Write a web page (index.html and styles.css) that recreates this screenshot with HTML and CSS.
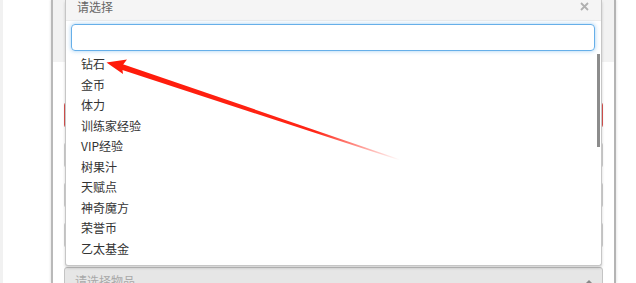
FILE: index.html
```html
<!DOCTYPE html>
<html lang="zh">
<head>
<meta charset="utf-8">
<title>请选择</title>
<link rel="stylesheet" href="styles.css">
</head>
<body>
<div class="page">
  <div class="gutter"></div>
  <div class="modal">
    <div class="modal-top"></div>
    <div class="modal-body">
      <div class="field field-error"></div>
      <div class="field"></div>
      <div class="field"></div>
      <div class="field"></div>
      <div class="select-box"><span>请选择物品</span><span class="caret"></span></div>
    </div>
  </div>

  <div class="dropdown">
    <div class="dd-header">
      <span>请选择</span>
      <svg class="close" width="9" height="9" viewBox="0 0 9 9"><path d="M1 1L8 8M8 1L1 8" stroke="#b0b0b0" stroke-width="1.8"/></svg>
    </div>
    <div class="dd-search"><div class="search-input"></div></div>
    <div class="dd-list">
      <ul class="items">
        <li>钻石</li>
        <li>金币</li>
        <li>体力</li>
        <li>训练家经验</li>
        <li>VIP经验</li>
        <li>树果汁</li>
        <li>天赋点</li>
        <li>神奇魔方</li>
        <li>荣誉币</li>
        <li>乙太基金</li>
      </ul>
      <div class="scrollbar"><div class="thumb"></div></div>
    </div>
  </div>

  <svg class="arrow" width="636" height="283" viewBox="0 0 636 283">
    <defs>
      <linearGradient id="fade" gradientUnits="userSpaceOnUse" x1="118" y1="66" x2="400" y2="160">
        <stop offset="0" stop-color="#ff1a0a" stop-opacity="1"/>
        <stop offset="0.7" stop-color="#ff1a0a" stop-opacity="0.95"/>
        <stop offset="1" stop-color="#ff1a0a" stop-opacity="0"/>
      </linearGradient>
    </defs>
    <polygon points="120,63.2 118.5,68.8 400,160.6 400.4,159.4" fill="url(#fade)"/>
    <polygon points="106.5,62.5 127,59.5 122,66 123,74" fill="#ff1a0a"/>
  </svg>
</div>
</body>
</html>
```

FILE: styles.css
```css
* { box-sizing: border-box; }
html, body { margin: 0; padding: 0; }
body {
  background: #fff;
  font-family: "Noto Sans CJK SC", "Noto Sans", sans-serif;
  color: #333;
}
.page {
  position: relative;
  width: 636px;
  height: 283px;
  overflow: hidden;
  display: flex;
}
.gutter {
  width: 51px;
  border-left: 3px solid #f1f1f1;
}
.modal {
  width: 565px;
  border-left: 2px solid #b9b9b9;
  border-right: 2px solid #b4b4b4;
  display: flex;
  flex-direction: column;
  box-shadow: -1px 0 2px rgba(0,0,0,0.08), 1px 0 2px rgba(0,0,0,0.08);
}
.modal-top {
  height: 62px;
  flex: none;
  background: #f2f2f2;
}
.modal-body {
  padding: 40px 11px 0;
  display: flex;
  flex-direction: column;
  gap: 14px;
}
.field {
  height: 26px;
  flex: none;
  border: 1px solid #cfcfcf;
  border-radius: 3px;
}
.field-error { border-color: #d9534f; }
.select-box {
  flex: none;
  margin-top: 5px;
  height: 26px;
  background: #e6e6e6;
  border: 1px solid #c4c4c4;
  border-radius: 3px;
  display: flex;
  justify-content: space-between;
  padding: 6px 9px 0 10px;
  font-size: 12px;
  line-height: 14px;
  color: #a9a9a9;
}
.caret {
  margin-top: 6px;
  width: 0; height: 0;
  border-left: 4px solid transparent;
  border-right: 4px solid transparent;
  border-bottom: 4px solid #888;
}
.dropdown {
  position: absolute;
  left: 65px;
  top: 0;
  width: 537px;
  height: 266px;
  background: #fff;
  border: 1px solid #c6c6c6;
  border-top: 0;
  border-radius: 0 0 3px 3px;
  box-shadow: 0 2px 3px rgba(0,0,0,0.18);
  display: flex;
  flex-direction: column;
}
.dd-header {
  height: 21px;
  background: #f5f5f5;
  border-bottom: 1px solid #ececec;
  display: flex;
  justify-content: space-between;
  padding: 0 12px 0 11px;
  font-size: 12px;
  line-height: 13px;
  color: #666;
}
.close { margin-top: 2px; }
.dd-search {
  padding: 3px 6px 3px 5px;
}
.search-input {
  height: 27px;
  border: 1px solid #66afe9;
  border-radius: 4px;
  box-shadow: 0 0 4px rgba(102,175,233,0.6);
}
.dd-list {
  flex: 1;
  display: flex;
}
.items {
  flex: 1;
  list-style: none;
  margin: 0;
  padding: 0;
}
.items li {
  height: 20.5px;
  line-height: 20px;
  padding-left: 15px;
  font-size: 12px;
  color: #333;
}
.scrollbar {
  width: 6px;
  padding-left: 2px;
}
.thumb {
  width: 3px;
  height: 93px;
  background: #8c8c8c;
}
.arrow {
  position: absolute;
  left: 0;
  top: 0;
  pointer-events: none;
}
```
